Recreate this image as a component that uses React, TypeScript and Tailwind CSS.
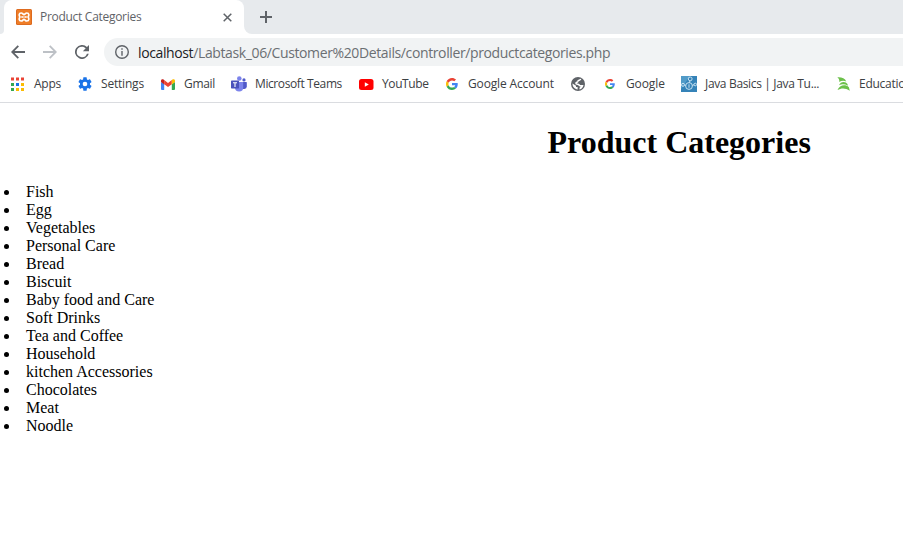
import type { ReactNode } from "react";

const categories = [
  "Fish", "Egg", "Vegetables", "Personal Care", "Bread", "Biscuit",
  "Baby food and Care", "Soft Drinks", "Tea and Coffee", "Household",
  "kitchen Accessories", "Chocolates", "Meat", "Noodle",
];

function XamppIcon() {
  return (
    <svg width="16" height="16" viewBox="0 0 16 16" className="shrink-0">
      <rect width="16" height="16" rx="1.5" fill="#d9661c" />
      <rect x=".8" y=".8" width="14.4" height="14.4" rx="1" fill="#ee7d28" />
      <path d="M5.200 4C6.700 4 7 5.600 8 5.600S9.300 4 10.800 4c2.700 0 2.200 2.700 1.300 4 .9 1.300 1.400 4-1.300 4-1.500 0-1.800-1.600-2.800-1.600S6.700 12 5.200 12c-2.700 0-2.200-2.700-1.300-4C3 6.700 2.500 4 5.200 4Z" fill="none" stroke="#fff" strokeWidth="1.700" />
      <path d="M5.800 8h4.400M6 7v2M10 7v2" stroke="#fff" strokeWidth="1.200" />
    </svg>
  );
}

function AppsIcon() {
  const colors = ["#ea4335", "#ea4335", "#ea4335", "#34a853", "#1a73e8", "#fbbc04", "#34a853", "#fbbc04", "#fbbc04"];
  return (
    <svg width="14" height="14" viewBox="0 0 14 14">
      {colors.map((c, i) => (
        <rect key={i} x={1 + (i % 3) * 5} y={(i < 3 ? 0.500 : 1) + Math.floor(i / 3) * 5} width="3" height="3" fill={c} />
      ))}
    </svg>
  );
}

function GearIcon() {
  return (
    <svg width="16" height="16" viewBox="0 0 24 24" className="-ml-px">
      <path fill="#1a73e8" d="M19.430 12.980c.04-.32.070-.64.070-.98s-.03-.66-.07-.98l2.110-1.650c.19-.15.240-.42.120-.64l-2-3.460c-.12-.22-.39-.3-.61-.22l-2.490 1c-.52-.4-1.080-.73-1.690-.98l-.38-2.650A.488.488 0 0 0 14 2h-4c-.25 0-.46.180-.49.420l-.38 2.650c-.61.250-1.170.590-1.690.980l-2.490-1c-.23-.09-.49 0-.61.220l-2 3.460c-.13.220-.07.490.120.640l2.110 1.650c-.04.320-.07.650-.07.980s.030.660.070.980l-2.110 1.650c-.19.150-.24.420-.12.640l2 3.460c.12.220.390.300.610.220l2.490-1c.52.400 1.080.730 1.690.980l.38 2.650c.03.240.240.420.490.420h4c.25 0 .46-.18.490-.42l.38-2.650c.61-.25 1.170-.59 1.690-.98l2.490 1c.23.090.490 0 .61-.22l2-3.460c.12-.22.070-.49-.12-.64l-2.110-1.650ZM12 15.500A3.500 3.500 0 1 1 12 8.500a3.500 3.500 0 0 1 0 7Z" />
    </svg>
  );
}

function GmailIcon() {
  return (
    <svg width="14" height="11" viewBox="0 0 14 11">
      <path fill="#4285f4" d="M0 3v7q0 1 1 1h2.200V5Z" />
      <path fill="#34a853" d="M10.800 11H13q1 0 1-1V3l-3.200 2Z" />
      <path fill="#ea4335" d="M3.200 5.300V1.100L7 3.900l3.800-2.800v4.200L7 8.100Z" />
      <path fill="#c5221f" d="M0 1.600v1.500l3.200 2.300V1.100L2.500.5C1.400-.3 0 .3 0 1.600Z" />
      <path fill="#fbbc04" d="M10.800 1.100v4.300L14 3.100V1.600C14 .3 12.600-.3 11.500.5Z" />
    </svg>
  );
}

function TeamsIcon() {
  return (
    <svg width="16" height="16" viewBox="0 0 16 16">
      <circle cx="13" cy="3.900" r="1.600" fill="#5059c9" />
      <path fill="#5059c9" d="M11 6h4.200q.6 0 .6.600v4q0 2.300-2.400 2.300H11Z" />
      <circle cx="8.300" cy="2.500" r="2.300" fill="#7b83eb" />
      <path fill="#7b83eb" d="M4 6h8.200v5.500a4.100 4.100 0 0 1-8.200 0Z" />
      <rect y="4.500" width="8" height="8" rx=".7" fill="#4b53bc" />
      <path d="M2 6.700h4M4 6.700V11" stroke="#fff" strokeWidth="1.100" />
    </svg>
  );
}

function YouTubeIcon() {
  return (
    <svg width="15" height="11" viewBox="0 0 15 11">
      <rect width="14.500" height="11" rx="2.500" fill="#f00" />
      <path d="m5.800 3.200 4 2.300-4 2.300Z" fill="#fff" />
    </svg>
  );
}

function GoogleG({ size }: { size: number }) {
  return (
    <svg width={size} height={size} viewBox="0 0 48 48">
      <path fill="#ea4335" d="M24 9.500c3.540 0 6.710 1.220 9.210 3.600l6.850-6.850C35.900 2.380 30.470 0 24 0 14.620 0 6.510 5.380 2.560 13.220l7.980 6.190C12.430 13.720 17.740 9.500 24 9.500z" />
      <path fill="#4285f4" d="M46.980 24.550c0-1.570-.15-3.090-.38-4.550H24v9.020h12.940c-.58 2.960-2.260 5.480-4.780 7.180l7.730 6c4.510-4.180 7.090-10.360 7.090-17.650z" />
      <path fill="#fbbc05" d="M10.530 28.590A14.500 14.500 0 0 1 9.770 24c0-1.600.280-3.140.760-4.590l-7.980-6.190A24 24 0 0 0 0 24c0 3.880.920 7.540 2.560 10.780l7.970-6.190z" />
      <path fill="#34a853" d="M24 48c6.480 0 11.930-2.130 15.890-5.810l-7.730-6c-2.150 1.450-4.920 2.300-8.160 2.300-6.260 0-11.570-4.220-13.470-9.910l-7.980 6.190C6.510 42.620 14.620 48 24 48z" />
    </svg>
  );
}

function GlobeIcon() {
  return (
    <svg width="14" height="14" viewBox="0 0 14 14">
      <circle cx="7" cy="7" r="7" fill="#5f6368" />
      <path fill="none" stroke="#fff" strokeWidth="1.500" strokeLinejoin="round" d="M9.600 1.800C9.800 3.600 7 3 6.800 4.400 6.600 5.600 4.900 5 4.900 6.300c0 .7.700.9 1.700.9 1.700 0 1.300 1.500 2.600 1.500H11" />
      <path fill="#fff" d="M1.500 6.600 5 8.800v1.200h1.600v2.500C3.700 12.300 1.400 9.800 1.500 6.600ZM8.500 8h4c-.3 2.200-1.900 4-4 4.500v-1.700l1.200-1.100Z" />
    </svg>
  );
}

function JavaIcon() {
  return (
    <svg width="16" height="16" viewBox="0 0 16 16">
      <rect width="16" height="16" fill="#3583b8" />
      <path d="M0 0h9L0 13Z" fill="#519bc8" />
      <g fill="none" stroke="#d5eaf6" strokeWidth=".9">
        <circle cx="8" cy="10" r="3.400" />
        <circle cx="9.200" cy="2.900" r="1.900" />
        <circle cx="2" cy="8.800" r="1.500" />
        <circle cx="14.300" cy="8.500" r="1.300" />
        <path d="M8.900 4.800 8.500 6.600M3.500 9.200h1.100M11.400 9.300l1.600-.5M8 8.300v3.500" />
      </g>
    </svg>
  );
}

function LeafIcon() {
  return (
    <svg width="13" height="14" viewBox="0 0 13 14" fill="#6cc04a">
      <path d="M.3.3C4.500 0 8 1.200 9.300 4.600 6.800 3.300 4.400 3.600 2.300 5 2.500 3 1.900 1.500.3.300Z" />
      <path d="M2 8.200C3.300 4.400 8.500 3.700 10.500 7l.4 1.700C7.700 6.900 4.600 6.900 2 8.200Z" />
      <path d="M.5 13C2.500 8 8.300 6.900 11.900 10.300l.9 3.500C8.300 10.700 4.300 11 .5 13Z" />
    </svg>
  );
}

function Bookmark({ icon, label, box, iconBox, text }: { icon: ReactNode; label?: string; box: string; iconBox: string; text?: string }) {
  return (
    <div className={`flex h-full shrink-0 items-center ${box}`}>
      <span className={`flex shrink-0 items-center ${iconBox}`}>{icon}</span>
      {label && <span className={`whitespace-nowrap ${text ?? ""}`}>{label}</span>}
    </div>
  );
}

export default function App() {
  return (
    <div className="h-[539px] w-[903px] overflow-hidden bg-white font-['Open_Sans','Noto_Sans',sans-serif]">
      <header>
        <div className="flex h-[34px] items-start bg-[#e7eaed]">
          <div className="flex h-[34px] w-1 items-end bg-white"><i className="h-full w-full rounded-br-lg bg-[#e7eaed]" /></div>
          <div className="flex h-[34px] w-60 items-center rounded-t-lg bg-white pl-3">
            <XamppIcon />
            <span className="ml-2 w-[183px] whitespace-nowrap text-[12px] leading-4 tracking-[-0.29px] text-[#5f6368]">Product Categories</span>
            <svg width="9" height="9" viewBox="0 0 9 9" className="shrink-0" stroke="#5f6368" strokeWidth="1.500"><path d="m.7.7 7.600 7.600M8.300.7.7 8.300" /></svg>
          </div>
          <div className="h-[34px] w-2 bg-white"><i className="block h-full rounded-bl-lg bg-[#e7eaed]" /></div>
          <svg width="12" height="12" viewBox="0 0 12 12" className="ml-2 mt-[11px]" stroke="#5f6368" strokeWidth="2"><path d="M6 0v12M0 6h12" /></svg>
        </div>
        <div className="flex h-8 items-center pt-1">
          <div className="flex w-[104px] shrink-0 items-center pl-[11px]">
            <svg width="14" height="14" viewBox="0 0 14 14" fill="none" stroke="#5f6368" strokeWidth="1.800"><path d="M14 7H1.500M7.300.8 1.200 7l6.100 6.200" /></svg>
            <svg width="14" height="14" viewBox="0 0 14 14" className="ml-[18px]" fill="none" stroke="#bdc1c6" strokeWidth="1.800"><path d="M0 7h12.500M6.700.8 12.800 7l-6.100 6.200" /></svg>
            <svg width="14" height="14" viewBox="4 4 16 16" className="ml-[18px]" fill="#5f6368"><path d="M17.650 6.350A8 8 0 1 0 19.730 14h-2.080A6 6 0 1 1 12 6c1.660 0 3.140.690 4.220 1.780L13 11h7V4l-2.350 2.350Z" /></svg>
          </div>
          <div className="flex h-7 grow items-center rounded-l-full bg-[#f1f3f4] pl-[11px] text-[14px] text-[#6b6f73]">
            <svg width="14" height="14" viewBox="0 0 14 14" fill="none" stroke="#5f6368" strokeWidth="1.400"><circle cx="7" cy="7" r="6.300" /><path d="M7 3.300v1.500M7 6.100v4.600" /></svg>
            <span className="ml-[9px] whitespace-nowrap tracking-[-0.38px]"><span className="text-[#202124]">localhost</span>/Labtask_06/Customer%20Details/controller/productcategories.php</span>
          </div>
        </div>
        <nav className="flex h-[37px] items-center overflow-hidden border-b border-[#dadce0] pl-2.5 text-[12px] leading-4 text-[#3c4043]">
          <Bookmark icon={<AppsIcon />} label="Apps" box="w-[68px]" iconBox="w-6" text="tracking-[-0.25px]" />
          <Bookmark icon={<GearIcon />} label="Settings" box="w-[83px]" iconBox="w-[23px]" text="tracking-[-0.2px]" />
          <Bookmark icon={<GmailIcon />} label="Gmail" box="w-[70px]" iconBox="w-[23px]" text="tracking-[-0.3px]" />
          <Bookmark icon={<TeamsIcon />} label="Microsoft Teams" box="w-[128px]" iconBox="w-6" text="tracking-[-0.4px]" />
          <Bookmark icon={<YouTubeIcon />} label="YouTube" box="w-[87px]" iconBox="w-[23px]" text="tracking-[-0.4px]" />
          <Bookmark icon={<GoogleG size={12} />} label="Google Account" box="w-[125px]" iconBox="w-[22px]" text="tracking-[-0.15px]" />
          <Bookmark icon={<GlobeIcon />} box="w-[34px]" iconBox="w-4" />
          <Bookmark icon={<GoogleG size={10} />} label="Google" box="w-[76px]" iconBox="w-[21px]" text="tracking-[-0.1px]" />
          <Bookmark icon={<JavaIcon />} label="Java Basics | Java Tu..." box="w-[156px]" iconBox="w-6" text="tracking-[-0.34px]" />
          <Bookmark icon={<LeafIcon />} label="Education" box="w-20" iconBox="w-[22px]" text="tracking-[-0.25px]" />
        </nav>
      </header>
      <main className="font-['Liberation_Serif',serif] text-[16px] leading-[18px] text-black">
        <h1 className="ml-[547.5px] pt-[21px] text-[32px] font-bold leading-[37px]">Product Categories</h1>
        <ul className="mt-[22px] pl-1">
          {categories.map((name) => (
            <li key={name} className="flex h-[18px] items-center whitespace-nowrap">
              <i className="mr-[17px] size-[5px] rounded-full bg-black" />
              {name}
            </li>
          ))}
        </ul>
      </main>
    </div>
  );
}
